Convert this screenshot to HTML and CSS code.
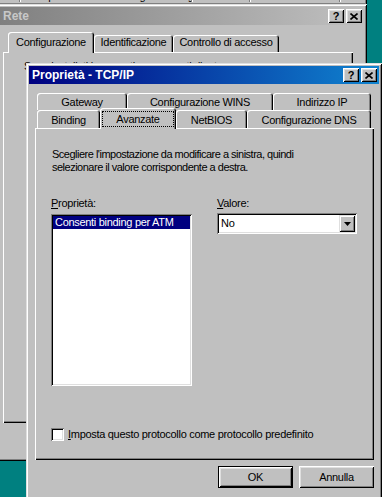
FILE: index.html
```html
<!DOCTYPE html>
<html lang="it">
<head>
    <meta charset="UTF-8">
    <title>Proprietà - TCP/IP</title>
    <link rel="stylesheet" href="styles.css">
</head>
<body>
<div class="desktop">
    <!-- finestra dietro, se ne vede solo il bordo -->
    <div class="win back-win">
        <div class="strip">
            <span class="strip-cell c1"></span>
            <span class="strip-cell c2">Tipo di scheda&nbsp;&nbsp;&nbsp;Configurazione guidata</span>
            <span class="strip-cell c3">Installa</span>
            <span class="strip-cell c4">Elimina</span>
            <span class="strip-cell c5"></span>
        </div>
    </div>

    <div class="win rete">
        <div class="titlebar inactive">
            <span class="title">Rete</span>
            <div class="caption-btns">
                <span class="cbtn">?</span>
                <span class="cbtn"><svg width="8" height="7" viewBox="0 0 8 7"><path d="M0.5 0.5L7.5 6.5M7.5 0.5L0.5 6.5" stroke="#000" stroke-width="1.6"/></svg></span>
            </div>
        </div>
        <div class="dlg-body">
            <div class="tabs rete-tabs">
                <div class="tab active w-conf">Configurazione</div>
                <div class="tab w-ident">Identificazione</div>
                <div class="tab w-ctrl">Controllo di accesso</div>
            </div>
            <div class="panel rete-panel">
                <div class="under-text">Sono installati i seguenti componenti di rete:</div>
            </div>
        </div>
    </div>

    <div class="win tcpip">
        <div class="titlebar active">
            <span class="title">Proprietà - TCP/IP</span>
            <div class="caption-btns">
                <span class="cbtn">?</span>
                <span class="cbtn"><svg width="8" height="7" viewBox="0 0 8 7"><path d="M0.5 0.5L7.5 6.5M7.5 0.5L0.5 6.5" stroke="#000" stroke-width="1.6"/></svg></span>
            </div>
        </div>
        <div class="dlg-body">
            <div class="tabs row-back">
                <div class="tab w-gw">Gateway</div>
                <div class="tab w-wins">Configurazione WINS</div>
                <div class="tab w-ip">Indirizzo IP</div>
            </div>
            <div class="tabs row-front">
                <div class="tab w-bind">Binding</div>
                <div class="tab active w-adv"><span class="focus">Avanzate</span></div>
                <div class="tab w-nb">NetBIOS</div>
                <div class="tab w-dns">Configurazione DNS</div>
            </div>
            <div class="panel tcp-panel">
                <p class="hint">Scegliere l'impostazione da modificare a sinistra, quindi<br>selezionare il valore corrispondente a destra.</p>
                <div class="cols">
                    <div class="col-left">
                        <div class="lbl"><u>P</u>roprietà:</div>
                        <div class="listbox">
                            <div class="item selected">Consenti binding per ATM</div>
                        </div>
                    </div>
                    <div class="col-right">
                        <div class="lbl"><u>V</u>alore:</div>
                        <div class="combo">
                            <span class="combo-text">No</span>
                            <span class="drop"><svg width="7" height="4" viewBox="0 0 7 4"><path d="M0 0h7L3.5 4z" fill="#000"/></svg></span>
                        </div>
                    </div>
                </div>
                <div class="check-row">
                    <span class="checkbox"></span>
                    <span><u>I</u>mposta questo protocollo come protocollo predefinito</span>
                </div>
            </div>
            <div class="buttons">
                <button class="btn default">OK</button>
                <button class="btn">Annulla</button>
            </div>
        </div>
    </div>
</div>
</body>
</html>
```

FILE: styles.css
```css
*{
    box-sizing: border-box;
}
body{
    margin: 0;
    background: #008080;
    font-family: "Liberation Sans", Arial, sans-serif;
    font-size: 11px;
    letter-spacing: -0.3px;
    color: #000;
}
.desktop{
    position: relative;
    width: 382px;
    height: 497px;
    overflow: hidden;
}
.win{
    position: absolute;
    background: #c0c0c0;
    padding: 3px;
    box-shadow: inset 1px 1px #dfdfdf, inset -1px -1px #000, inset 2px 2px #fff, inset -2px -2px #808080;
}

/* finestra dietro */
.back-win{
    z-index: 1;
    left: -3px;
    top: -22px;
    width: 370px;
    height: 27px;
    padding: 0;
    display: flex;
    flex-direction: column;
    justify-content: flex-end;
    overflow: hidden;
}
.strip{
    display: flex;
    height: 12px;
    line-height: 12px;
    margin-bottom: 3px;
}
.strip-cell{
    border-right: 1px solid #808080;
    box-shadow: 1px 0 #fff;
    white-space: nowrap;
    overflow: hidden;
    padding-left: 20px;
}
.strip-cell.c1{ width: 23px; padding: 0; }
.strip-cell.c2{ width: 172px; }
.strip-cell.c3{ width: 58px; }
.strip-cell.c4{ width: 90px; }
.strip-cell.c5{ flex: 1; border: 0; box-shadow: none; }

.rete{
    z-index: 2;
    left: -3px;
    top: 4px;
    width: 370px;
    height: 457px;
}
.tcpip{
    z-index: 3;
    left: 26px;
    top: 63px;
    width: 356px;
    height: 440px;
}

/* barra del titolo */
.titlebar{
    height: 18px;
    display: flex;
    align-items: center;
    padding: 0 2px 0 3px;
}
.titlebar.inactive{
    background: linear-gradient(90deg, #808080, #c0c0c0);
    color: #c8c8c8;
}
.titlebar.active{
    background: linear-gradient(90deg, #000080, #1084d0);
    color: #fff;
}
.title{
    flex: 1;
    font-weight: bold;
    font-size: 12px;
    letter-spacing: 0;
}
.caption-btns{
    display: flex;
    gap: 2px;
}
.cbtn{
    width: 16px;
    height: 14px;
    display: flex;
    align-items: center;
    justify-content: center;
    background: #c0c0c0;
    color: #000;
    font-weight: bold;
    font-size: 11px;
    letter-spacing: 0;
    box-shadow: inset 1px 1px #fff, inset -1px -1px #000, inset 2px 2px #dfdfdf, inset -2px -2px #808080;
}

/* corpo finestra */
.rete .dlg-body{
    padding: 7px 6px 0 3px;
}
.tcpip .dlg-body{
    padding: 9px 6px 0 6px;
}

/* schede */
.tabs{
    display: flex;
    align-items: flex-end;
    padding-left: 2px;
    line-height: 13px;
}
.tab{
    position: relative;
    text-align: center;
    white-space: nowrap;
    background: #c0c0c0;
    border-radius: 3px 3px 0 0;
    box-shadow: inset 1px 1px #fff, inset -1px 0 #000, inset -2px 0 #808080;
}
.tab.active{
    z-index: 2;
}

.rete-tabs{
    height: 20px;
    padding-left: 5px;
}
.rete-tabs .tab{
    height: 17px;
    padding-top: 1px;
}
.rete-tabs .tab.active{
    height: 21px;
    margin-bottom: -1px;
    padding-top: 4px;
}
.w-conf{ width: 86px; }
.w-ident{ width: 79px; }
.w-ctrl{ width: 106px; }

.row-back{
    height: 17px;
}
.row-back .tab{
    height: 17px;
    padding-top: 3px;
}
.row-front{
    height: 18px;
}
.row-front .tab{
    height: 18px;
    padding-top: 4px;
}
.row-front .tab.active{
    height: 21px;
    margin-bottom: -1px;
    padding: 3px 2px 1px 2px;
}
.focus{
    display: block;
    height: 16px;
    border: 1px dotted #000;
    padding-top: 1px;
}
.w-gw{ width: 90px; }
.w-wins{ width: 146px; }
.w-ip{ width: 98px; }
.w-bind{ width: 63px; }
.w-adv{ width: 76px; }
.w-nb{ width: 71px; }
.w-dns{ width: 124px; }

/* pannello */
.panel{
    position: relative;
    z-index: 1;
    background: #c0c0c0;
    box-shadow: inset 1px 1px #fff, inset -1px -1px #000, inset -2px -2px #808080;
}
.rete-panel{
    width: 350px;
    height: 371px;
    padding: 8px 0 0 21px;
    line-height: 13px;
}
.under-text{
    white-space: nowrap;
}
.tcp-panel{
    width: 339px;
    height: 332px;
    padding: 20px 0 0 17px;
    line-height: 13px;
}
.hint{
    margin: 0;
    letter-spacing: -0.5px;
}
.cols{
    display: flex;
    gap: 25px;
    margin-top: 23px;
    margin-left: -1px;
}
.col-left{
    width: 141px;
}
.col-right{
    width: 140px;
}
.lbl{
    height: 13px;
    margin-bottom: 4px;
}
.listbox{
    height: 172px;
    background: #fff;
    padding: 2px;
    box-shadow: inset 1px 1px #808080, inset -1px -1px #fff, inset 2px 2px #000, inset -2px -2px #dfdfdf;
}
.item{
    height: 13px;
    padding-left: 2px;
    white-space: nowrap;
}
.item.selected{
    background: #000080;
    color: #fff;
}
.combo{
    display: flex;
    align-items: center;
    height: 21px;
    margin-top: -1px;
    background: #fff;
    padding: 2px;
    box-shadow: inset 1px 1px #808080, inset -1px -1px #fff, inset 2px 2px #000, inset -2px -2px #dfdfdf;
}
.combo-text{
    flex: 1;
    padding-left: 2px;
}
.drop{
    width: 16px;
    height: 17px;
    display: flex;
    align-items: center;
    justify-content: center;
    background: #c0c0c0;
    box-shadow: inset 1px 1px #dfdfdf, inset -1px -1px #000, inset 2px 2px #fff, inset -2px -2px #808080;
}
.check-row{
    display: flex;
    align-items: center;
    gap: 4px;
    margin-top: 42px;
    margin-left: -1px;
}
.checkbox{
    width: 13px;
    height: 13px;
    background: #fff;
    box-shadow: inset 1px 1px #808080, inset -1px -1px #fff, inset 2px 2px #000, inset -2px -2px #dfdfdf;
}

/* pulsanti */
.buttons{
    display: flex;
    justify-content: flex-end;
    gap: 6px;
    width: 339px;
    margin-top: 6px;
}
.btn{
    width: 75px;
    height: 22px;
    padding: 0;
    border: 0;
    background: #c0c0c0;
    font: inherit;
    letter-spacing: inherit;
    color: #000;
    box-shadow: inset 1px 1px #fff, inset -1px -1px #000, inset 2px 2px #dfdfdf, inset -2px -2px #808080;
}
.btn.default{
    box-shadow: inset 0 0 0 1px #000, inset 2px 2px #fff, inset -2px -2px #000, inset 3px 3px #dfdfdf, inset -3px -3px #808080;
}
```
